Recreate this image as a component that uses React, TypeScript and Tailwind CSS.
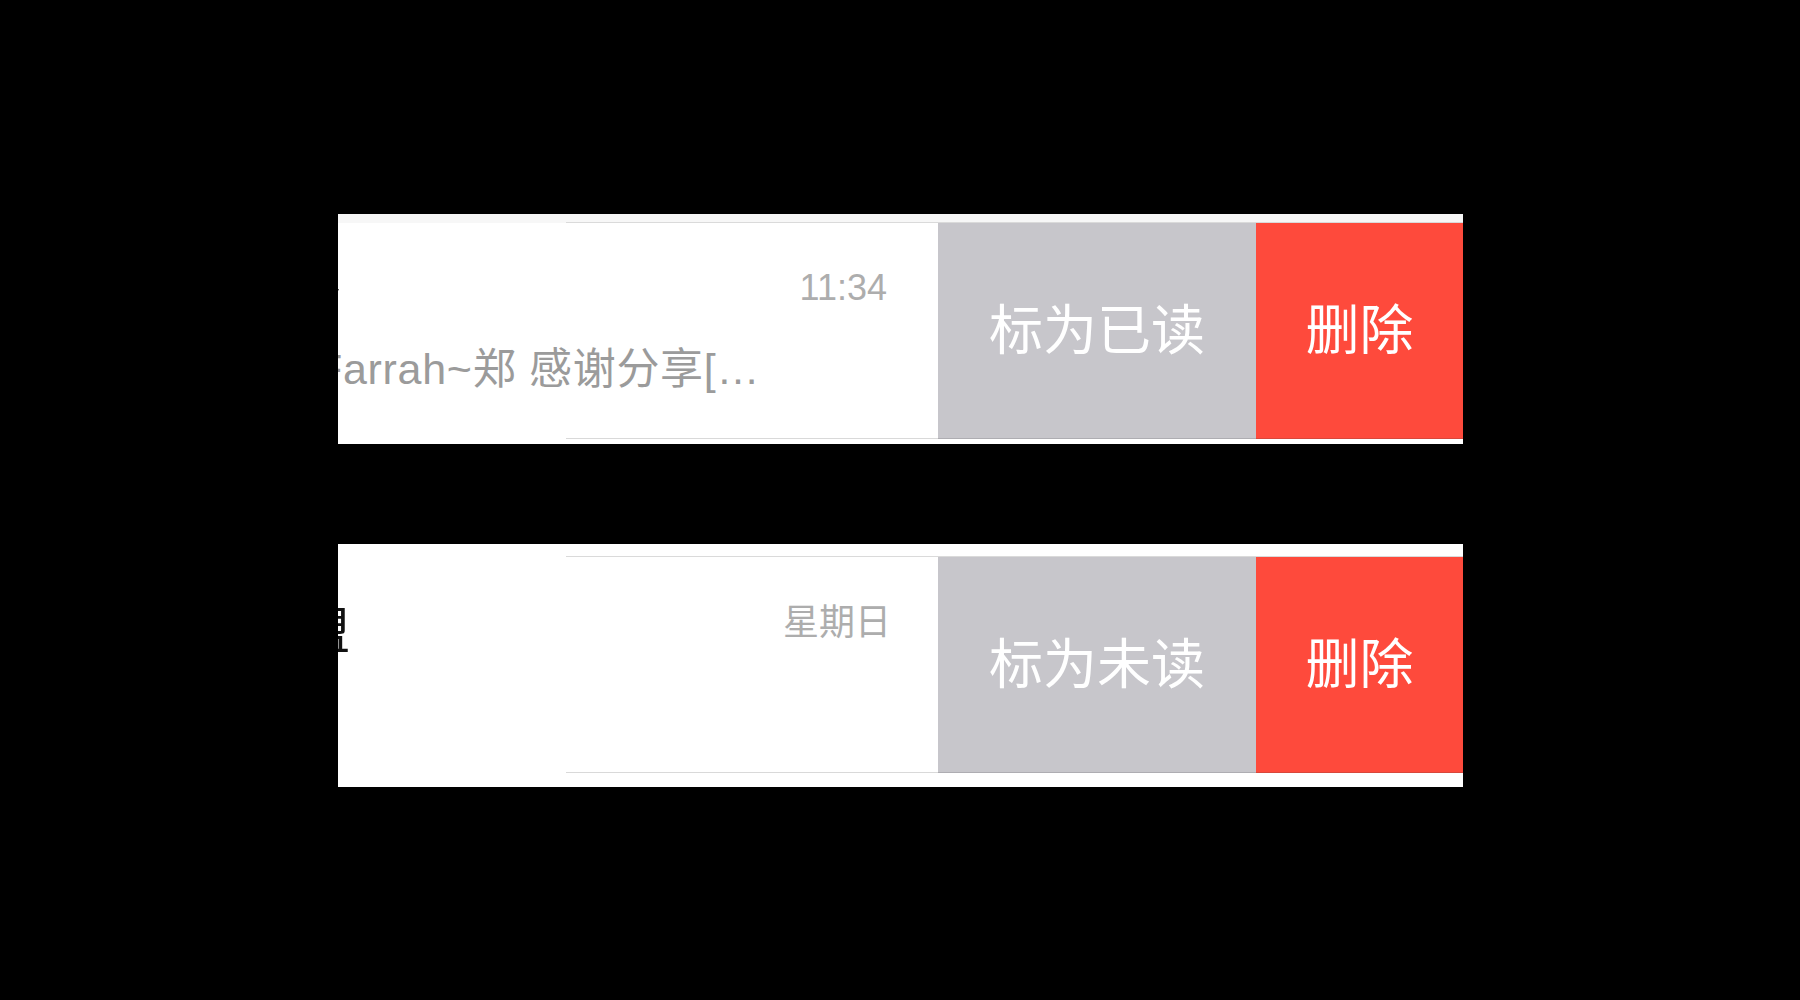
import React from "react";

type CellProps = {
  topStrip: string;
  topLineLeft: string;
  bottomPad: string;
  title: string;
  titleShift: string;
  time: string;
  timeShift: string;
  preview?: string;
  action: string;
};

function Cell({ topStrip, topLineLeft, bottomPad, title, titleShift, time, timeShift, preview, action }: CellProps) {
  return (
    <div className="w-[1125px] bg-white overflow-hidden flex flex-col">
      <div className={topStrip} />
      <div className="flex h-px">
        <div className={topLineLeft} />
        <div className="flex-1 bg-[#dadada]" />
      </div>
      <div className="flex h-[215px]">
        <div className="w-[600px] flex flex-col pt-[50px]">
          <div className="flex items-start justify-between h-[50px]">
            <span className={titleShift}>{title}</span>
            <span className={timeShift}>{time}</span>
          </div>
          {preview ? (
            <div className="-ml-[22px] mt-[25px] text-[43px] tracking-[0.7px] leading-none text-[#9b9b9b] whitespace-nowrap">
              {preview}
            </div>
          ) : null}
        </div>
        <div className="w-[318px] bg-[#c7c6cb] flex items-center justify-center text-white text-[54px] leading-none">
          {action}
        </div>
        <div className="flex-1 bg-[#fe4a3c] flex items-center justify-center text-white text-[54px] leading-none">
          删除
        </div>
      </div>
      <div className="flex h-px">
        <div className="w-[228px] bg-white" />
        <div className="w-[372px] bg-[#d9d9d9]" />
        <div className="w-[318px] bg-[#aeadb2]" />
        <div className="flex-1 bg-[#d8473b]" />
      </div>
      <div className={bottomPad} />
    </div>
  );
}

export default function App() {
  return (
    <div className="w-full h-[1000px] bg-black pt-[214px] pl-[338px] font-['Liberation_Sans','Noto_Sans_CJK_SC',sans-serif]">
      <div className="flex flex-col gap-[100px] w-[1125px]">
        <Cell
          topStrip="h-[8px] bg-[#f7f7f7]"
          topLineLeft="w-[228px] bg-[#f7f7f7]"
          bottomPad="h-[5px] bg-white"
          title="交流会"
          titleShift="-ml-[147px] text-[50px] leading-none text-[#111111] whitespace-nowrap"
          time="11:34"
          timeShift="mr-[51px] -mt-[3px] text-[36px] leading-none text-[#adadad] whitespace-nowrap"
          preview="Farrah~郑 感谢分享[…"
          action="标为已读"
        />
        <Cell
          topStrip="h-[12px] bg-white"
          topLineLeft="w-[228px] bg-white"
          bottomPad="h-[14px] bg-white"
          title="联盟"
          titleShift="-ml-[88px] text-[50px] leading-none text-[#111111] whitespace-nowrap"
          time="星期日"
          timeShift="mr-[47px] -mt-[2px] text-[36px] leading-none text-[#adadad] whitespace-nowrap"
          action="标为未读"
        />
      </div>
    </div>
  );
}
